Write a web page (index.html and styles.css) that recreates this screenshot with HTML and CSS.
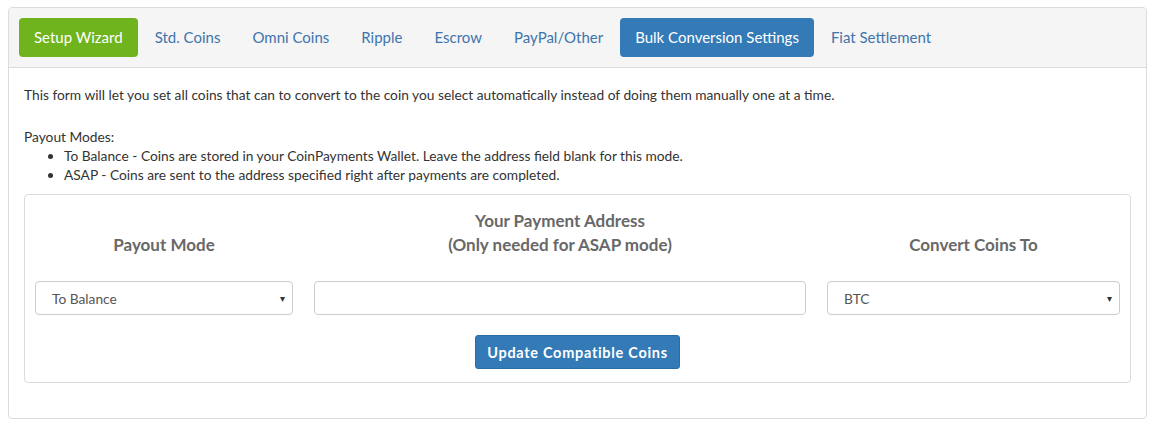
FILE: index.html
```html
<!DOCTYPE html>
<html>
<head>
<meta charset="utf-8">
<link rel="stylesheet" href="styles.css">
</head>
<body>
<div class="panel">
  <div class="panel-heading">
    <ul class="tabs">
      <li><a class="tab tab-green">Setup Wizard</a></li>
      <li><a class="tab">Std. Coins</a></li>
      <li><a class="tab">Omni Coins</a></li>
      <li><a class="tab">Ripple</a></li>
      <li><a class="tab">Escrow</a></li>
      <li><a class="tab">PayPal/Other</a></li>
      <li><a class="tab tab-active">Bulk Conversion Settings</a></li>
      <li><a class="tab">Fiat Settlement</a></li>
    </ul>
  </div>
  <div class="panel-body">
    <p class="intro">This form will let you set all coins that can to convert to the coin you select automatically instead of doing them manually one at a time.</p>
    <p class="modes-title">Payout Modes:</p>
    <ul class="modes">
      <li>To Balance - Coins are stored in your CoinPayments Wallet. Leave the address field blank for this mode.</li>
      <li>ASAP - Coins are sent to the address specified right after payments are completed.</li>
    </ul>
    <div class="well">
      <div class="grid">
        <div class="head">Payout Mode</div>
        <div class="head">Your Payment Address<br>(Only needed for ASAP mode)</div>
        <div class="head">Convert Coins To</div>
        <div class="select"><span>To Balance</span><span class="arrow">&#9662;</span></div>
        <div class="input"></div>
        <div class="select"><span>BTC</span><span class="arrow">&#9662;</span></div>
      </div>
      <div class="actions">
        <button class="btn">Update Compatible Coins</button>
      </div>
    </div>
  </div>
</div>
</body>
</html>
```

FILE: styles.css
```css
* { box-sizing: border-box; }
body {
  margin: 7px 12px 0 8px;
  font-family: Lato, "Open Sans", sans-serif;
  color: #333;
  background: #fff;
}
.panel {
  border: 1px solid #dcdcdc;
  border-radius: 4px;
  background: #fff;
}
.panel-heading {
  background: #f5f5f5;
  border-bottom: 1px solid #dcdcdc;
  padding: 10px;
  border-radius: 4px 4px 0 0;
}
.tabs {
  list-style: none;
  margin: 0;
  padding: 0;
  display: flex;
  gap: 2px;
}
.tab {
  display: block;
  padding: 10px 15px;
  font-size: 15px;
  line-height: 19px;
  color: #3f74ac;
  border-radius: 4px;
}
.tab-green { background: #6fb41c; color: #fff; }
.tab-active { background: #337ab7; color: #fff; }
.panel-body {
  padding: 17px 15px 35px 15px;
  font-size: 13.75px;
  line-height: 19px;
}
.intro { margin: 0 0 23px 0; }
.modes-title { margin: 0; }
.modes {
  margin: 0 0 10px 0;
  padding-left: 40px;
}
.well {
  border: 1px solid #dcdcdc;
  border-radius: 4px;
  padding: 14px 10px 13px 10px;
}
.grid {
  display: grid;
  grid-template-columns: 258px 492px 293px;
  column-gap: 21px;
  row-gap: 24px;
  align-items: end;
}
.head {
  text-align: center;
  font-weight: bold;
  font-size: 17px;
  line-height: 24px;
  color: #686868;
}
.select, .input {
  height: 34px;
  border: 1px solid #ccc;
  border-radius: 4px;
  background: #fff;
}
.select {
  display: flex;
  align-items: center;
  justify-content: space-between;
  padding: 0 7px 0 16px;
  font-size: 13.75px;
  color: #555;
}
.arrow { font-size: 10px; color: #333; }
.actions {
  display: flex;
  justify-content: center;
  margin-top: 20px;
}
.btn {
  font-family: Lato, "Open Sans", sans-serif;
  background: #337ab7;
  color: #fff;
  border: 1px solid #2e6da4;
  border-radius: 3px;
  height: 34px;
  width: 205px;
  font-size: 14.5px;
  font-weight: bold;
  letter-spacing: 0.7px;
  padding: 0;
}
```
